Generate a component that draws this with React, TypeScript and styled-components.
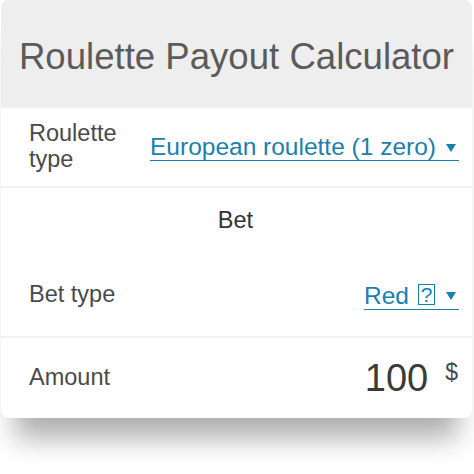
import React from "react";
import styled, { createGlobalStyle } from "styled-components";

const Global = createGlobalStyle`
  html, body { margin: 0; padding: 0; background: #ffffff; }
  body { font-family: "Liberation Sans", Arial, sans-serif; }
`;

const Page = styled.div`
  width: 474px;
  height: 474px;
  overflow: hidden;
  padding: 0 2px 0 1px;
  box-sizing: border-box;
`;

const Card = styled.div`
  width: 471px;
  border-radius: 8px;
  overflow: hidden;
  background: #f1f1f1;
  display: flex;
  flex-direction: column;
  gap: 2px;
  box-shadow: 0 34px 26px -14px rgba(0, 0, 0, 0.32);
`;

const Header = styled.div`
  height: 106px;
  background: #eeeeee;
  display: flex;
  align-items: center;
  justify-content: center;
  font-size: 36.6px;
  color: #5b5b5b;
  padding-top: 7px;
  box-sizing: border-box;
`;

const Row = styled.div<{ $h: number }>`
  height: ${(p) => p.$h}px;
  background: #ffffff;
  display: flex;
  align-items: center;
  justify-content: space-between;
  padding: 0 13px 0 28px;
  box-sizing: border-box;
`;

const Section = styled.div`
  height: 148px;
  background: #ffffff;
  display: flex;
  flex-direction: column;
`;

const SectionTitle = styled.div`
  height: 64px;
  display: flex;
  align-items: center;
  justify-content: center;
  font-size: 23.5px;
  color: #333333;
  padding-right: 2px;
`;

const Label = styled.div<{ $w?: number; $shift?: number }>`
  font-size: 23.5px;
  line-height: 26px;
  color: #4a4a4a;
  width: ${(p) => (p.$w ? `${p.$w}px` : "auto")};
  margin-top: ${(p) => p.$shift ?? 0}px;
`;

const Link = styled.a<{ $shift?: number }>`
  display: inline-flex;
  align-items: center;
  font-size: 24.5px;
  line-height: 26px;
  color: #1b7fae;
  border-bottom: 1px solid #1b7fae;
  white-space: pre;
  cursor: pointer;
  margin-top: ${(p) => p.$shift ?? 0}px;
`;

const Caret = styled.span<{ $gap: number }>`
  width: 0;
  height: 0;
  border-left: 5px solid transparent;
  border-right: 5px solid transparent;
  border-top: 8px solid #1b7fae;
  margin-left: ${(p) => p.$gap}px;
  margin-right: 3px;
  margin-top: 1px;
`;

const Missing = styled.span`
  align-self: flex-start;
  margin-top: 1px;
  margin-left: 9px;
  width: 17px;
  height: 21px;
  border: 1px solid #1b7fae;
  font-size: 21px;
  line-height: 20px;
  text-align: center;
  box-sizing: border-box;
`;

const ValueGroup = styled.div`
  display: flex;
  align-items: flex-start;
`;

const BigValue = styled.span`
  font-size: 38px;
  color: #3a3a3a;
  line-height: 40px;
`;

const Unit = styled.span`
  font-size: 23px;
  color: #4a4a4a;
  margin-left: 17px;
  margin-top: 1px;
  margin-right: 1px;
`;

export default function App() {
  return (
    <Page>
      <Global />
      <Card>
        <Header>Roulette Payout Calculator</Header>
        <Row $h={78}>
          <Label $w={110} $shift={-3}>
            Roulette type
          </Label>
          <Link $shift={1}>
            European roulette (1 zero)
            <Caret $gap={10} />
          </Link>
        </Row>
        <Section>
          <SectionTitle>Bet</SectionTitle>
          <Row $h={84}>
            <Label>Bet type</Label>
            <Link $shift={4}>
              Red
              <Missing>?</Missing>
              <Caret $gap={11} />
            </Link>
          </Row>
        </Section>
        <Row $h={80}>
          <Label $shift={-3}>Amount</Label>
          <ValueGroup>
            <BigValue>100</BigValue>
            <Unit>$</Unit>
          </ValueGroup>
        </Row>
      </Card>
    </Page>
  );
}
